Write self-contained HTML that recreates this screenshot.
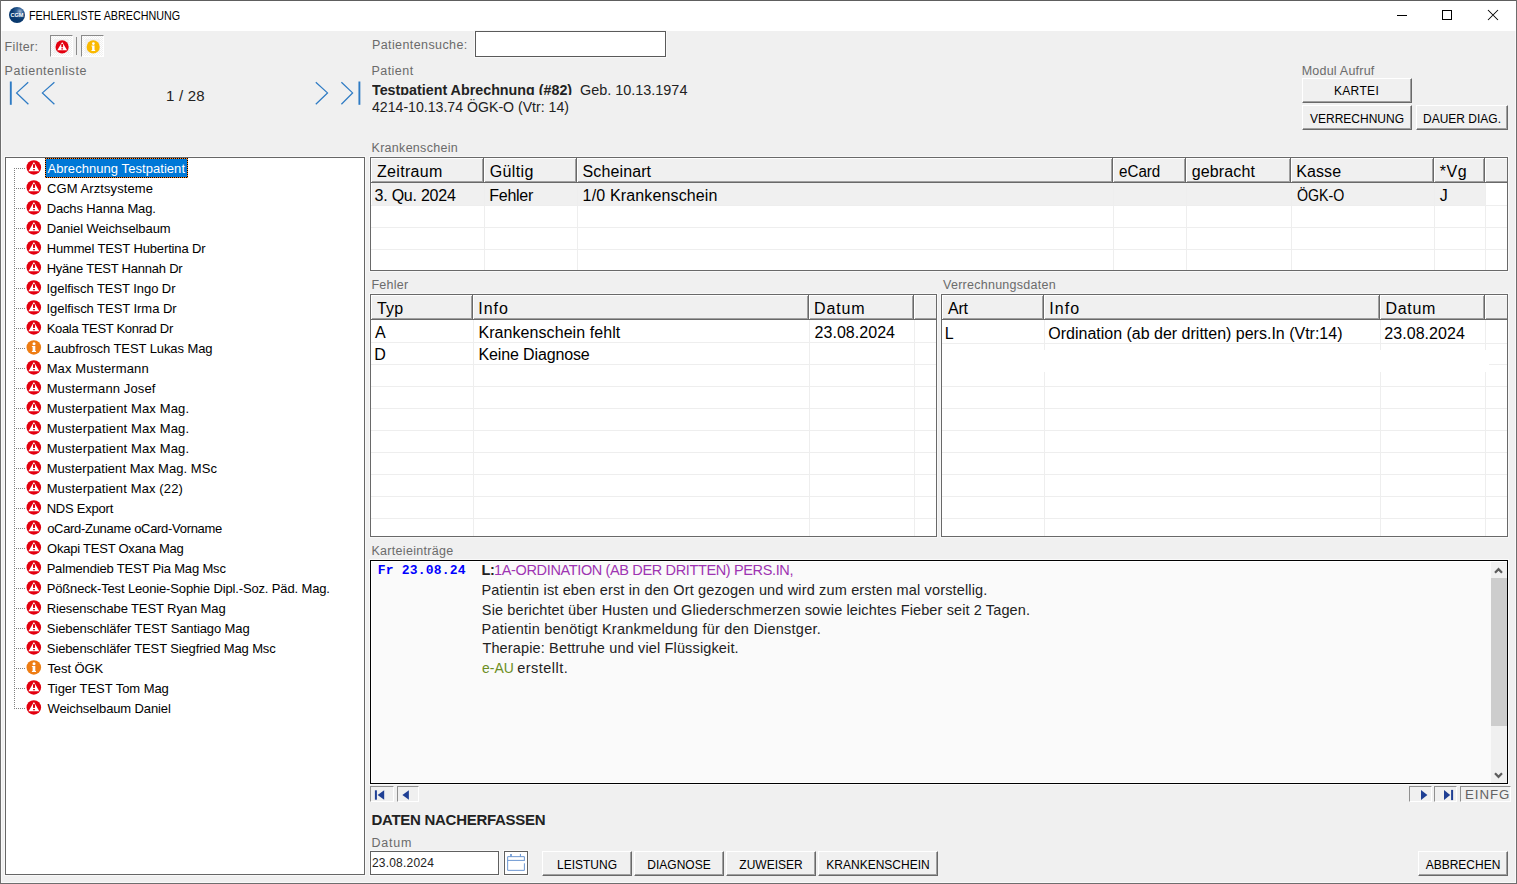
<!DOCTYPE html>
<html lang="de"><head><meta charset="utf-8"><title>FEHLERLISTE ABRECHNUNG</title>
<style>
html,body{margin:0;padding:0;width:1517px;height:884px;overflow:hidden;background:#f0f0f0;font-family:"Liberation Sans",sans-serif}
.a{position:absolute;box-sizing:content-box}
.t{position:absolute;white-space:pre;line-height:20px;height:20px}
.tbl{background:#fff;border:1px solid #696969;box-shadow:0 0 0 1px #f8f8f8}
.btn{background:#f0f0f0;box-sizing:border-box;border:1px solid;border-color:#fff #696969 #696969 #fff;box-shadow:inset -1px -1px 0 #a0a0a0;
 font-size:12px;color:#000;text-align:center;line-height:25px;white-space:pre}
.btn span{position:relative;top:.5px}
.btn.k span{top:-.5px;letter-spacing:.35px;left:-.5px}
.tog{background:repeating-conic-gradient(#fff 0 25%,#f0f0f0 0 50%) 0 0/2px 2px;border:1px solid;border-color:#8a8a8a #fff #fff #8a8a8a}
.snk{background:#f0f0f0;border:1px solid;border-color:#909090 #fff #fff #909090}
.vdot{background:repeating-linear-gradient(to bottom,#808080 0,#808080 1px,transparent 1px,transparent 2px)}
.hdot{background:repeating-linear-gradient(to right,#808080 0,#808080 1px,transparent 1px,transparent 2px)}
</style></head>
<body>
<div class="a" style="left:0px;top:0px;width:1517px;height:884px;background:#fff;border:0"></div>
<div class="a" style="left:1px;top:31px;width:1515px;height:852px;background:#f0f0f0;"></div>
<div class="a" style="left:1px;top:31px;width:1px;height:852px;background:#f9f9f9;"></div>
<div class="a" style="left:1515px;top:31px;width:1px;height:852px;background:#f9f9f9;"></div>
<div class="a" style="left:1px;top:882px;width:1515px;height:1px;background:#f9f9f9;"></div>
<div class="a" style="left:0px;top:0px;width:1517px;height:1px;background:#5e5e5e;"></div>
<div class="a" style="left:0px;top:0px;width:1px;height:884px;background:#6e6e6e;"></div>
<div class="a" style="left:1516px;top:0px;width:1px;height:884px;background:#6e6e6e;"></div>
<div class="a" style="left:0px;top:883px;width:1517px;height:1px;background:#6e6e6e;"></div>
<div class="a" style="left:9px;top:7px;width:16px;height:16px;border-radius:50%;background:radial-gradient(circle at 68% 28%,#9fb6d0 0%,#2f5f95 22%,#0b3b70 48%,#063468 100%)"></div>
<div class="a" style="left:9px;top:11.2px;width:16px;height:8px;line-height:8px;text-align:center;color:#fff;font-size:5.6px;font-weight:bold;letter-spacing:-.1px">CGM</div>
<div class="a" style="left:1397px;top:15px;width:10px;height:1px;background:#000;"></div>
<div class="a" style="left:1442px;top:10px;width:8px;height:8px;border:1px solid #000"></div>
<svg class="a" style="left:1487px;top:9px" width="12" height="12" viewBox="0 0 12 12"><path d="M1 1 L11 11 M11 1 L1 11" stroke="#000" stroke-width="1.05" fill="none"/></svg>
<div class="a tog" style="left:50px;top:35px;width:21px;height:20px"></div>
<div class="a" style="left:54px;top:39px;width:15px;height:14px;background:#f0f0f0;"></div>
<div class="a tog" style="left:81px;top:35px;width:21px;height:20px"></div>
<div class="a" style="left:85px;top:39px;width:15px;height:14px;background:#f0f0f0;"></div>
<div class="a" style="left:76px;top:37px;width:1px;height:18px;background:#8c8c8c;"></div>
<svg class="a" style="left:54px;top:39px" width="16" height="16" viewBox="0 0 16 16"><g transform="translate(0.90 0.70) scale(0.9000)"><circle cx="8" cy="8" r="7.3" fill="#e3000f"/><path d="M8.1 2.6 L13.5 11.7 L2.7 11.7 Z" fill="#fff"/><rect x="7.1" y="4.9" width="2" height="3.5" rx=".3" fill="#e3000f"/><rect x="7.1" y="9.5" width="2" height="1.4" rx=".3" fill="#e3000f"/></g></svg>
<svg class="a" style="left:86px;top:39px" width="16" height="16" viewBox="0 0 16 16"><g transform="translate(0.00 0.70) scale(0.9000)"><circle cx="8" cy="8" r="7.3" fill="#fab900"/><circle cx="8.2" cy="4.3" r="1.5" fill="#fff"/><path d="M6.1 6.5 H9.5 V11.5 H10.2 V12.5 H6.1 V11.5 H6.8 V7.5 H6.1 Z" fill="#fff"/></g></svg>
<svg class="a" style="left:5px;top:78px" width="360" height="30" viewBox="5 78 360 30" fill="none" stroke="#2e7bc4" stroke-width="1.25" stroke-linecap="butt"><path d="M10.8 81.5 V104.8" stroke-width="1.9"/><path d="M28.2 82.3 L16.6 92.9 L28.4 104.3"/><path d="M54.4 82.3 L42.4 92.9 L54.4 104.3"/><path d="M315.8 82.3 L327.5 92.9 L315.8 104.3"/><path d="M341.4 82.3 L352.6 92.9 L341.4 104.3"/><path d="M359.4 81.5 V104.8" stroke-width="1.9"/></svg>
<div class="a" style="left:5px;top:157px;width:358px;height:716px;background:#fff;border:1px solid #666;box-shadow:0 0 0 1px #f8f8f8"></div>
<div class="a vdot" style="left:14px;top:168px;width:1px;height:541px"></div>
<div class="a hdot" style="left:14px;top:168px;width:12px;height:1px"></div>
<svg class="a" style="left:25px;top:159px" width="17" height="17" viewBox="0 0 17 17"><g transform="translate(0.80 0.45) scale(1.0000)"><circle cx="8" cy="8" r="7.3" fill="#e3000f"/><path d="M8.1 2.6 L13.5 11.7 L2.7 11.7 Z" fill="#fff"/><rect x="7.2" y="4.55" width="2" height="4" rx=".4" fill="#e3000f"/><rect x="7.2" y="9.55" width="2" height="1.3" rx=".4" fill="#e3000f"/></g></svg>
<div class="a hdot" style="left:14px;top:188px;width:12px;height:1px"></div>
<svg class="a" style="left:25px;top:179px" width="17" height="17" viewBox="0 0 17 17"><g transform="translate(0.80 0.45) scale(1.0000)"><circle cx="8" cy="8" r="7.3" fill="#e3000f"/><path d="M8.1 2.6 L13.5 11.7 L2.7 11.7 Z" fill="#fff"/><rect x="7.2" y="4.55" width="2" height="4" rx=".4" fill="#e3000f"/><rect x="7.2" y="9.55" width="2" height="1.3" rx=".4" fill="#e3000f"/></g></svg>
<div class="a hdot" style="left:14px;top:208px;width:12px;height:1px"></div>
<svg class="a" style="left:25px;top:199px" width="17" height="17" viewBox="0 0 17 17"><g transform="translate(0.80 0.45) scale(1.0000)"><circle cx="8" cy="8" r="7.3" fill="#e3000f"/><path d="M8.1 2.6 L13.5 11.7 L2.7 11.7 Z" fill="#fff"/><rect x="7.2" y="4.55" width="2" height="4" rx=".4" fill="#e3000f"/><rect x="7.2" y="9.55" width="2" height="1.3" rx=".4" fill="#e3000f"/></g></svg>
<div class="a hdot" style="left:14px;top:228px;width:12px;height:1px"></div>
<svg class="a" style="left:25px;top:219px" width="17" height="17" viewBox="0 0 17 17"><g transform="translate(0.80 0.45) scale(1.0000)"><circle cx="8" cy="8" r="7.3" fill="#e3000f"/><path d="M8.1 2.6 L13.5 11.7 L2.7 11.7 Z" fill="#fff"/><rect x="7.2" y="4.55" width="2" height="4" rx=".4" fill="#e3000f"/><rect x="7.2" y="9.55" width="2" height="1.3" rx=".4" fill="#e3000f"/></g></svg>
<div class="a hdot" style="left:14px;top:248px;width:12px;height:1px"></div>
<svg class="a" style="left:25px;top:239px" width="17" height="17" viewBox="0 0 17 17"><g transform="translate(0.80 0.45) scale(1.0000)"><circle cx="8" cy="8" r="7.3" fill="#e3000f"/><path d="M8.1 2.6 L13.5 11.7 L2.7 11.7 Z" fill="#fff"/><rect x="7.2" y="4.55" width="2" height="4" rx=".4" fill="#e3000f"/><rect x="7.2" y="9.55" width="2" height="1.3" rx=".4" fill="#e3000f"/></g></svg>
<div class="a hdot" style="left:14px;top:268px;width:12px;height:1px"></div>
<svg class="a" style="left:25px;top:259px" width="17" height="17" viewBox="0 0 17 17"><g transform="translate(0.80 0.45) scale(1.0000)"><circle cx="8" cy="8" r="7.3" fill="#e3000f"/><path d="M8.1 2.6 L13.5 11.7 L2.7 11.7 Z" fill="#fff"/><rect x="7.2" y="4.55" width="2" height="4" rx=".4" fill="#e3000f"/><rect x="7.2" y="9.55" width="2" height="1.3" rx=".4" fill="#e3000f"/></g></svg>
<div class="a hdot" style="left:14px;top:288px;width:12px;height:1px"></div>
<svg class="a" style="left:25px;top:279px" width="17" height="17" viewBox="0 0 17 17"><g transform="translate(0.80 0.45) scale(1.0000)"><circle cx="8" cy="8" r="7.3" fill="#e3000f"/><path d="M8.1 2.6 L13.5 11.7 L2.7 11.7 Z" fill="#fff"/><rect x="7.2" y="4.55" width="2" height="4" rx=".4" fill="#e3000f"/><rect x="7.2" y="9.55" width="2" height="1.3" rx=".4" fill="#e3000f"/></g></svg>
<div class="a hdot" style="left:14px;top:308px;width:12px;height:1px"></div>
<svg class="a" style="left:25px;top:299px" width="17" height="17" viewBox="0 0 17 17"><g transform="translate(0.80 0.45) scale(1.0000)"><circle cx="8" cy="8" r="7.3" fill="#e3000f"/><path d="M8.1 2.6 L13.5 11.7 L2.7 11.7 Z" fill="#fff"/><rect x="7.2" y="4.55" width="2" height="4" rx=".4" fill="#e3000f"/><rect x="7.2" y="9.55" width="2" height="1.3" rx=".4" fill="#e3000f"/></g></svg>
<div class="a hdot" style="left:14px;top:328px;width:12px;height:1px"></div>
<svg class="a" style="left:25px;top:319px" width="17" height="17" viewBox="0 0 17 17"><g transform="translate(0.80 0.45) scale(1.0000)"><circle cx="8" cy="8" r="7.3" fill="#e3000f"/><path d="M8.1 2.6 L13.5 11.7 L2.7 11.7 Z" fill="#fff"/><rect x="7.2" y="4.55" width="2" height="4" rx=".4" fill="#e3000f"/><rect x="7.2" y="9.55" width="2" height="1.3" rx=".4" fill="#e3000f"/></g></svg>
<div class="a hdot" style="left:14px;top:348px;width:12px;height:1px"></div>
<svg class="a" style="left:25px;top:339px" width="17" height="17" viewBox="0 0 17 17"><g transform="translate(0.80 0.45) scale(1.0000)"><circle cx="8" cy="8" r="7.3" fill="#ee7d14"/><circle cx="8.2" cy="4.3" r="1.5" fill="#fff"/><path d="M6.1 6.5 H9.5 V11.5 H10.2 V12.5 H6.1 V11.5 H6.8 V7.5 H6.1 Z" fill="#fff"/></g></svg>
<div class="a hdot" style="left:14px;top:368px;width:12px;height:1px"></div>
<svg class="a" style="left:25px;top:359px" width="17" height="17" viewBox="0 0 17 17"><g transform="translate(0.80 0.45) scale(1.0000)"><circle cx="8" cy="8" r="7.3" fill="#e3000f"/><path d="M8.1 2.6 L13.5 11.7 L2.7 11.7 Z" fill="#fff"/><rect x="7.2" y="4.55" width="2" height="4" rx=".4" fill="#e3000f"/><rect x="7.2" y="9.55" width="2" height="1.3" rx=".4" fill="#e3000f"/></g></svg>
<div class="a hdot" style="left:14px;top:388px;width:12px;height:1px"></div>
<svg class="a" style="left:25px;top:379px" width="17" height="17" viewBox="0 0 17 17"><g transform="translate(0.80 0.45) scale(1.0000)"><circle cx="8" cy="8" r="7.3" fill="#e3000f"/><path d="M8.1 2.6 L13.5 11.7 L2.7 11.7 Z" fill="#fff"/><rect x="7.2" y="4.55" width="2" height="4" rx=".4" fill="#e3000f"/><rect x="7.2" y="9.55" width="2" height="1.3" rx=".4" fill="#e3000f"/></g></svg>
<div class="a hdot" style="left:14px;top:408px;width:12px;height:1px"></div>
<svg class="a" style="left:25px;top:399px" width="17" height="17" viewBox="0 0 17 17"><g transform="translate(0.80 0.45) scale(1.0000)"><circle cx="8" cy="8" r="7.3" fill="#e3000f"/><path d="M8.1 2.6 L13.5 11.7 L2.7 11.7 Z" fill="#fff"/><rect x="7.2" y="4.55" width="2" height="4" rx=".4" fill="#e3000f"/><rect x="7.2" y="9.55" width="2" height="1.3" rx=".4" fill="#e3000f"/></g></svg>
<div class="a hdot" style="left:14px;top:428px;width:12px;height:1px"></div>
<svg class="a" style="left:25px;top:419px" width="17" height="17" viewBox="0 0 17 17"><g transform="translate(0.80 0.45) scale(1.0000)"><circle cx="8" cy="8" r="7.3" fill="#e3000f"/><path d="M8.1 2.6 L13.5 11.7 L2.7 11.7 Z" fill="#fff"/><rect x="7.2" y="4.55" width="2" height="4" rx=".4" fill="#e3000f"/><rect x="7.2" y="9.55" width="2" height="1.3" rx=".4" fill="#e3000f"/></g></svg>
<div class="a hdot" style="left:14px;top:448px;width:12px;height:1px"></div>
<svg class="a" style="left:25px;top:439px" width="17" height="17" viewBox="0 0 17 17"><g transform="translate(0.80 0.45) scale(1.0000)"><circle cx="8" cy="8" r="7.3" fill="#e3000f"/><path d="M8.1 2.6 L13.5 11.7 L2.7 11.7 Z" fill="#fff"/><rect x="7.2" y="4.55" width="2" height="4" rx=".4" fill="#e3000f"/><rect x="7.2" y="9.55" width="2" height="1.3" rx=".4" fill="#e3000f"/></g></svg>
<div class="a hdot" style="left:14px;top:468px;width:12px;height:1px"></div>
<svg class="a" style="left:25px;top:459px" width="17" height="17" viewBox="0 0 17 17"><g transform="translate(0.80 0.45) scale(1.0000)"><circle cx="8" cy="8" r="7.3" fill="#e3000f"/><path d="M8.1 2.6 L13.5 11.7 L2.7 11.7 Z" fill="#fff"/><rect x="7.2" y="4.55" width="2" height="4" rx=".4" fill="#e3000f"/><rect x="7.2" y="9.55" width="2" height="1.3" rx=".4" fill="#e3000f"/></g></svg>
<div class="a hdot" style="left:14px;top:488px;width:12px;height:1px"></div>
<svg class="a" style="left:25px;top:479px" width="17" height="17" viewBox="0 0 17 17"><g transform="translate(0.80 0.45) scale(1.0000)"><circle cx="8" cy="8" r="7.3" fill="#e3000f"/><path d="M8.1 2.6 L13.5 11.7 L2.7 11.7 Z" fill="#fff"/><rect x="7.2" y="4.55" width="2" height="4" rx=".4" fill="#e3000f"/><rect x="7.2" y="9.55" width="2" height="1.3" rx=".4" fill="#e3000f"/></g></svg>
<div class="a hdot" style="left:14px;top:508px;width:12px;height:1px"></div>
<svg class="a" style="left:25px;top:499px" width="17" height="17" viewBox="0 0 17 17"><g transform="translate(0.80 0.45) scale(1.0000)"><circle cx="8" cy="8" r="7.3" fill="#e3000f"/><path d="M8.1 2.6 L13.5 11.7 L2.7 11.7 Z" fill="#fff"/><rect x="7.2" y="4.55" width="2" height="4" rx=".4" fill="#e3000f"/><rect x="7.2" y="9.55" width="2" height="1.3" rx=".4" fill="#e3000f"/></g></svg>
<div class="a hdot" style="left:14px;top:528px;width:12px;height:1px"></div>
<svg class="a" style="left:25px;top:519px" width="17" height="17" viewBox="0 0 17 17"><g transform="translate(0.80 0.45) scale(1.0000)"><circle cx="8" cy="8" r="7.3" fill="#e3000f"/><path d="M8.1 2.6 L13.5 11.7 L2.7 11.7 Z" fill="#fff"/><rect x="7.2" y="4.55" width="2" height="4" rx=".4" fill="#e3000f"/><rect x="7.2" y="9.55" width="2" height="1.3" rx=".4" fill="#e3000f"/></g></svg>
<div class="a hdot" style="left:14px;top:548px;width:12px;height:1px"></div>
<svg class="a" style="left:25px;top:539px" width="17" height="17" viewBox="0 0 17 17"><g transform="translate(0.80 0.45) scale(1.0000)"><circle cx="8" cy="8" r="7.3" fill="#e3000f"/><path d="M8.1 2.6 L13.5 11.7 L2.7 11.7 Z" fill="#fff"/><rect x="7.2" y="4.55" width="2" height="4" rx=".4" fill="#e3000f"/><rect x="7.2" y="9.55" width="2" height="1.3" rx=".4" fill="#e3000f"/></g></svg>
<div class="a hdot" style="left:14px;top:568px;width:12px;height:1px"></div>
<svg class="a" style="left:25px;top:559px" width="17" height="17" viewBox="0 0 17 17"><g transform="translate(0.80 0.45) scale(1.0000)"><circle cx="8" cy="8" r="7.3" fill="#e3000f"/><path d="M8.1 2.6 L13.5 11.7 L2.7 11.7 Z" fill="#fff"/><rect x="7.2" y="4.55" width="2" height="4" rx=".4" fill="#e3000f"/><rect x="7.2" y="9.55" width="2" height="1.3" rx=".4" fill="#e3000f"/></g></svg>
<div class="a hdot" style="left:14px;top:588px;width:12px;height:1px"></div>
<svg class="a" style="left:25px;top:579px" width="17" height="17" viewBox="0 0 17 17"><g transform="translate(0.80 0.45) scale(1.0000)"><circle cx="8" cy="8" r="7.3" fill="#e3000f"/><path d="M8.1 2.6 L13.5 11.7 L2.7 11.7 Z" fill="#fff"/><rect x="7.2" y="4.55" width="2" height="4" rx=".4" fill="#e3000f"/><rect x="7.2" y="9.55" width="2" height="1.3" rx=".4" fill="#e3000f"/></g></svg>
<div class="a hdot" style="left:14px;top:608px;width:12px;height:1px"></div>
<svg class="a" style="left:25px;top:599px" width="17" height="17" viewBox="0 0 17 17"><g transform="translate(0.80 0.45) scale(1.0000)"><circle cx="8" cy="8" r="7.3" fill="#e3000f"/><path d="M8.1 2.6 L13.5 11.7 L2.7 11.7 Z" fill="#fff"/><rect x="7.2" y="4.55" width="2" height="4" rx=".4" fill="#e3000f"/><rect x="7.2" y="9.55" width="2" height="1.3" rx=".4" fill="#e3000f"/></g></svg>
<div class="a hdot" style="left:14px;top:628px;width:12px;height:1px"></div>
<svg class="a" style="left:25px;top:619px" width="17" height="17" viewBox="0 0 17 17"><g transform="translate(0.80 0.45) scale(1.0000)"><circle cx="8" cy="8" r="7.3" fill="#e3000f"/><path d="M8.1 2.6 L13.5 11.7 L2.7 11.7 Z" fill="#fff"/><rect x="7.2" y="4.55" width="2" height="4" rx=".4" fill="#e3000f"/><rect x="7.2" y="9.55" width="2" height="1.3" rx=".4" fill="#e3000f"/></g></svg>
<div class="a hdot" style="left:14px;top:648px;width:12px;height:1px"></div>
<svg class="a" style="left:25px;top:639px" width="17" height="17" viewBox="0 0 17 17"><g transform="translate(0.80 0.45) scale(1.0000)"><circle cx="8" cy="8" r="7.3" fill="#e3000f"/><path d="M8.1 2.6 L13.5 11.7 L2.7 11.7 Z" fill="#fff"/><rect x="7.2" y="4.55" width="2" height="4" rx=".4" fill="#e3000f"/><rect x="7.2" y="9.55" width="2" height="1.3" rx=".4" fill="#e3000f"/></g></svg>
<div class="a hdot" style="left:14px;top:668px;width:12px;height:1px"></div>
<svg class="a" style="left:25px;top:659px" width="17" height="17" viewBox="0 0 17 17"><g transform="translate(0.80 0.45) scale(1.0000)"><circle cx="8" cy="8" r="7.3" fill="#ee7d14"/><circle cx="8.2" cy="4.3" r="1.5" fill="#fff"/><path d="M6.1 6.5 H9.5 V11.5 H10.2 V12.5 H6.1 V11.5 H6.8 V7.5 H6.1 Z" fill="#fff"/></g></svg>
<div class="a hdot" style="left:14px;top:688px;width:12px;height:1px"></div>
<svg class="a" style="left:25px;top:679px" width="17" height="17" viewBox="0 0 17 17"><g transform="translate(0.80 0.45) scale(1.0000)"><circle cx="8" cy="8" r="7.3" fill="#e3000f"/><path d="M8.1 2.6 L13.5 11.7 L2.7 11.7 Z" fill="#fff"/><rect x="7.2" y="4.55" width="2" height="4" rx=".4" fill="#e3000f"/><rect x="7.2" y="9.55" width="2" height="1.3" rx=".4" fill="#e3000f"/></g></svg>
<div class="a hdot" style="left:14px;top:708px;width:12px;height:1px"></div>
<svg class="a" style="left:25px;top:699px" width="17" height="17" viewBox="0 0 17 17"><g transform="translate(0.80 0.45) scale(1.0000)"><circle cx="8" cy="8" r="7.3" fill="#e3000f"/><path d="M8.1 2.6 L13.5 11.7 L2.7 11.7 Z" fill="#fff"/><rect x="7.2" y="4.55" width="2" height="4" rx=".4" fill="#e3000f"/><rect x="7.2" y="9.55" width="2" height="1.3" rx=".4" fill="#e3000f"/></g></svg>
<div class="a" style="left:45px;top:158px;width:143px;height:20px;background:repeating-conic-gradient(#ff8728 0 25%,#000 0 50%) 0 0/2px 2px"></div>
<div class="a" style="left:46px;top:159px;width:141px;height:18px;background:#0078d7"></div>
<div class="a" style="left:475px;top:31px;width:189px;height:24px;background:#fff;border:1px solid #5a5a5a;box-shadow:0 0 0 1px #f8f8f8"></div>
<div class="a btn k" style="left:1302px;top:78px;width:110px;height:25px"><span>KARTEI</span></div>
<div class="a btn" style="left:1302px;top:105px;width:110px;height:25px"><span>VERRECHNUNG</span></div>
<div class="a btn" style="left:1416px;top:105px;width:92px;height:25px"><span>DAUER DIAG.</span></div>
<div class="a tbl" style="left:370px;top:157px;width:1136px;height:112px"></div>
<div class="a" style="left:371px;top:158px;width:113px;height:25px;background:#f0f0f0;"></div>
<div class="a" style="left:371px;top:158px;width:113px;height:1px;background:#fff;"></div>
<div class="a" style="left:371px;top:158px;width:1px;height:24px;background:#fff;"></div>
<div class="a" style="left:482px;top:159px;width:1px;height:23px;background:#a0a0a0;"></div>
<div class="a" style="left:372px;top:181px;width:111px;height:1px;background:#a0a0a0;"></div>
<div class="a" style="left:483px;top:158px;width:1px;height:25px;background:#696969;"></div>
<div class="a" style="left:371px;top:182px;width:113px;height:1px;background:#696969;"></div>
<div class="a" style="left:484px;top:158px;width:93px;height:25px;background:#f0f0f0;"></div>
<div class="a" style="left:484px;top:158px;width:93px;height:1px;background:#fff;"></div>
<div class="a" style="left:484px;top:158px;width:1px;height:24px;background:#fff;"></div>
<div class="a" style="left:575px;top:159px;width:1px;height:23px;background:#a0a0a0;"></div>
<div class="a" style="left:485px;top:181px;width:91px;height:1px;background:#a0a0a0;"></div>
<div class="a" style="left:576px;top:158px;width:1px;height:25px;background:#696969;"></div>
<div class="a" style="left:484px;top:182px;width:93px;height:1px;background:#696969;"></div>
<div class="a" style="left:577px;top:158px;width:536px;height:25px;background:#f0f0f0;"></div>
<div class="a" style="left:577px;top:158px;width:536px;height:1px;background:#fff;"></div>
<div class="a" style="left:577px;top:158px;width:1px;height:24px;background:#fff;"></div>
<div class="a" style="left:1111px;top:159px;width:1px;height:23px;background:#a0a0a0;"></div>
<div class="a" style="left:578px;top:181px;width:534px;height:1px;background:#a0a0a0;"></div>
<div class="a" style="left:1112px;top:158px;width:1px;height:25px;background:#696969;"></div>
<div class="a" style="left:577px;top:182px;width:536px;height:1px;background:#696969;"></div>
<div class="a" style="left:1113px;top:158px;width:73px;height:25px;background:#f0f0f0;"></div>
<div class="a" style="left:1113px;top:158px;width:73px;height:1px;background:#fff;"></div>
<div class="a" style="left:1113px;top:158px;width:1px;height:24px;background:#fff;"></div>
<div class="a" style="left:1184px;top:159px;width:1px;height:23px;background:#a0a0a0;"></div>
<div class="a" style="left:1114px;top:181px;width:71px;height:1px;background:#a0a0a0;"></div>
<div class="a" style="left:1185px;top:158px;width:1px;height:25px;background:#696969;"></div>
<div class="a" style="left:1113px;top:182px;width:73px;height:1px;background:#696969;"></div>
<div class="a" style="left:1186px;top:158px;width:105px;height:25px;background:#f0f0f0;"></div>
<div class="a" style="left:1186px;top:158px;width:105px;height:1px;background:#fff;"></div>
<div class="a" style="left:1186px;top:158px;width:1px;height:24px;background:#fff;"></div>
<div class="a" style="left:1289px;top:159px;width:1px;height:23px;background:#a0a0a0;"></div>
<div class="a" style="left:1187px;top:181px;width:103px;height:1px;background:#a0a0a0;"></div>
<div class="a" style="left:1290px;top:158px;width:1px;height:25px;background:#696969;"></div>
<div class="a" style="left:1186px;top:182px;width:105px;height:1px;background:#696969;"></div>
<div class="a" style="left:1291px;top:158px;width:143px;height:25px;background:#f0f0f0;"></div>
<div class="a" style="left:1291px;top:158px;width:143px;height:1px;background:#fff;"></div>
<div class="a" style="left:1291px;top:158px;width:1px;height:24px;background:#fff;"></div>
<div class="a" style="left:1432px;top:159px;width:1px;height:23px;background:#a0a0a0;"></div>
<div class="a" style="left:1292px;top:181px;width:141px;height:1px;background:#a0a0a0;"></div>
<div class="a" style="left:1433px;top:158px;width:1px;height:25px;background:#696969;"></div>
<div class="a" style="left:1291px;top:182px;width:143px;height:1px;background:#696969;"></div>
<div class="a" style="left:1434px;top:158px;width:51px;height:25px;background:#f0f0f0;"></div>
<div class="a" style="left:1434px;top:158px;width:51px;height:1px;background:#fff;"></div>
<div class="a" style="left:1434px;top:158px;width:1px;height:24px;background:#fff;"></div>
<div class="a" style="left:1483px;top:159px;width:1px;height:23px;background:#a0a0a0;"></div>
<div class="a" style="left:1435px;top:181px;width:49px;height:1px;background:#a0a0a0;"></div>
<div class="a" style="left:1484px;top:158px;width:1px;height:25px;background:#696969;"></div>
<div class="a" style="left:1434px;top:182px;width:51px;height:1px;background:#696969;"></div>
<div class="a" style="left:1485px;top:158px;width:22px;height:25px;background:#f0f0f0;"></div>
<div class="a" style="left:1485px;top:158px;width:22px;height:1px;background:#fff;"></div>
<div class="a" style="left:1485px;top:158px;width:1px;height:24px;background:#fff;"></div>
<div class="a" style="left:1486px;top:181px;width:21px;height:1px;background:#a0a0a0;"></div>
<div class="a" style="left:1485px;top:182px;width:22px;height:1px;background:#696969;"></div>
<div class="a" style="left:372px;top:183px;width:1114px;height:23px;background:#f0f0f0;"></div>
<div class="a" style="left:371px;top:205px;width:1136px;height:1px;background:#eeeeee;"></div>
<div class="a" style="left:371px;top:227px;width:1136px;height:1px;background:#eeeeee;"></div>
<div class="a" style="left:371px;top:249px;width:1136px;height:1px;background:#eeeeee;"></div>
<div class="a" style="left:484px;top:183px;width:1px;height:87px;background:#eeeeee;"></div>
<div class="a" style="left:577px;top:183px;width:1px;height:87px;background:#eeeeee;"></div>
<div class="a" style="left:1113px;top:183px;width:1px;height:87px;background:#eeeeee;"></div>
<div class="a" style="left:1186px;top:183px;width:1px;height:87px;background:#eeeeee;"></div>
<div class="a" style="left:1291px;top:183px;width:1px;height:87px;background:#eeeeee;"></div>
<div class="a" style="left:1434px;top:183px;width:1px;height:87px;background:#eeeeee;"></div>
<div class="a" style="left:1485px;top:183px;width:1px;height:87px;background:#eeeeee;"></div>
<div class="a tbl" style="left:370px;top:294px;width:565px;height:241px"></div>
<div class="a" style="left:371px;top:295px;width:102px;height:25px;background:#f0f0f0;"></div>
<div class="a" style="left:371px;top:295px;width:102px;height:1px;background:#fff;"></div>
<div class="a" style="left:371px;top:295px;width:1px;height:24px;background:#fff;"></div>
<div class="a" style="left:471px;top:296px;width:1px;height:23px;background:#a0a0a0;"></div>
<div class="a" style="left:372px;top:318px;width:100px;height:1px;background:#a0a0a0;"></div>
<div class="a" style="left:472px;top:295px;width:1px;height:25px;background:#696969;"></div>
<div class="a" style="left:371px;top:319px;width:102px;height:1px;background:#696969;"></div>
<div class="a" style="left:473px;top:295px;width:336px;height:25px;background:#f0f0f0;"></div>
<div class="a" style="left:473px;top:295px;width:336px;height:1px;background:#fff;"></div>
<div class="a" style="left:473px;top:295px;width:1px;height:24px;background:#fff;"></div>
<div class="a" style="left:807px;top:296px;width:1px;height:23px;background:#a0a0a0;"></div>
<div class="a" style="left:474px;top:318px;width:334px;height:1px;background:#a0a0a0;"></div>
<div class="a" style="left:808px;top:295px;width:1px;height:25px;background:#696969;"></div>
<div class="a" style="left:473px;top:319px;width:336px;height:1px;background:#696969;"></div>
<div class="a" style="left:809px;top:295px;width:105px;height:25px;background:#f0f0f0;"></div>
<div class="a" style="left:809px;top:295px;width:105px;height:1px;background:#fff;"></div>
<div class="a" style="left:809px;top:295px;width:1px;height:24px;background:#fff;"></div>
<div class="a" style="left:912px;top:296px;width:1px;height:23px;background:#a0a0a0;"></div>
<div class="a" style="left:810px;top:318px;width:103px;height:1px;background:#a0a0a0;"></div>
<div class="a" style="left:913px;top:295px;width:1px;height:25px;background:#696969;"></div>
<div class="a" style="left:809px;top:319px;width:105px;height:1px;background:#696969;"></div>
<div class="a" style="left:914px;top:295px;width:22px;height:25px;background:#f0f0f0;"></div>
<div class="a" style="left:914px;top:295px;width:22px;height:1px;background:#fff;"></div>
<div class="a" style="left:914px;top:295px;width:1px;height:24px;background:#fff;"></div>
<div class="a" style="left:915px;top:318px;width:21px;height:1px;background:#a0a0a0;"></div>
<div class="a" style="left:914px;top:319px;width:22px;height:1px;background:#696969;"></div>
<div class="a" style="left:371px;top:342px;width:565px;height:1px;background:#eeeeee;"></div>
<div class="a" style="left:371px;top:364px;width:565px;height:1px;background:#eeeeee;"></div>
<div class="a" style="left:371px;top:386px;width:565px;height:1px;background:#eeeeee;"></div>
<div class="a" style="left:371px;top:408px;width:565px;height:1px;background:#eeeeee;"></div>
<div class="a" style="left:371px;top:430px;width:565px;height:1px;background:#eeeeee;"></div>
<div class="a" style="left:371px;top:452px;width:565px;height:1px;background:#eeeeee;"></div>
<div class="a" style="left:371px;top:474px;width:565px;height:1px;background:#eeeeee;"></div>
<div class="a" style="left:371px;top:496px;width:565px;height:1px;background:#eeeeee;"></div>
<div class="a" style="left:371px;top:518px;width:565px;height:1px;background:#eeeeee;"></div>
<div class="a" style="left:473px;top:320px;width:1px;height:216px;background:#eeeeee;"></div>
<div class="a" style="left:809px;top:320px;width:1px;height:216px;background:#eeeeee;"></div>
<div class="a" style="left:914px;top:320px;width:1px;height:216px;background:#eeeeee;"></div>
<div class="a tbl" style="left:941px;top:294px;width:565px;height:241px"></div>
<div class="a" style="left:942px;top:295px;width:102px;height:25px;background:#f0f0f0;"></div>
<div class="a" style="left:942px;top:295px;width:102px;height:1px;background:#fff;"></div>
<div class="a" style="left:942px;top:295px;width:1px;height:24px;background:#fff;"></div>
<div class="a" style="left:1042px;top:296px;width:1px;height:23px;background:#a0a0a0;"></div>
<div class="a" style="left:943px;top:318px;width:100px;height:1px;background:#a0a0a0;"></div>
<div class="a" style="left:1043px;top:295px;width:1px;height:25px;background:#696969;"></div>
<div class="a" style="left:942px;top:319px;width:102px;height:1px;background:#696969;"></div>
<div class="a" style="left:1044px;top:295px;width:336px;height:25px;background:#f0f0f0;"></div>
<div class="a" style="left:1044px;top:295px;width:336px;height:1px;background:#fff;"></div>
<div class="a" style="left:1044px;top:295px;width:1px;height:24px;background:#fff;"></div>
<div class="a" style="left:1378px;top:296px;width:1px;height:23px;background:#a0a0a0;"></div>
<div class="a" style="left:1045px;top:318px;width:334px;height:1px;background:#a0a0a0;"></div>
<div class="a" style="left:1379px;top:295px;width:1px;height:25px;background:#696969;"></div>
<div class="a" style="left:1044px;top:319px;width:336px;height:1px;background:#696969;"></div>
<div class="a" style="left:1380px;top:295px;width:105px;height:25px;background:#f0f0f0;"></div>
<div class="a" style="left:1380px;top:295px;width:105px;height:1px;background:#fff;"></div>
<div class="a" style="left:1380px;top:295px;width:1px;height:24px;background:#fff;"></div>
<div class="a" style="left:1483px;top:296px;width:1px;height:23px;background:#a0a0a0;"></div>
<div class="a" style="left:1381px;top:318px;width:103px;height:1px;background:#a0a0a0;"></div>
<div class="a" style="left:1484px;top:295px;width:1px;height:25px;background:#696969;"></div>
<div class="a" style="left:1380px;top:319px;width:105px;height:1px;background:#696969;"></div>
<div class="a" style="left:1485px;top:295px;width:22px;height:25px;background:#f0f0f0;"></div>
<div class="a" style="left:1485px;top:295px;width:22px;height:1px;background:#fff;"></div>
<div class="a" style="left:1485px;top:295px;width:1px;height:24px;background:#fff;"></div>
<div class="a" style="left:1486px;top:318px;width:21px;height:1px;background:#a0a0a0;"></div>
<div class="a" style="left:1485px;top:319px;width:22px;height:1px;background:#696969;"></div>
<div class="a" style="left:942px;top:343px;width:565px;height:1px;background:#eeeeee;"></div>
<div class="a" style="left:942px;top:364px;width:565px;height:1px;background:#eeeeee;"></div>
<div class="a" style="left:942px;top:386px;width:565px;height:1px;background:#eeeeee;"></div>
<div class="a" style="left:942px;top:408px;width:565px;height:1px;background:#eeeeee;"></div>
<div class="a" style="left:942px;top:430px;width:565px;height:1px;background:#eeeeee;"></div>
<div class="a" style="left:942px;top:452px;width:565px;height:1px;background:#eeeeee;"></div>
<div class="a" style="left:942px;top:474px;width:565px;height:1px;background:#eeeeee;"></div>
<div class="a" style="left:942px;top:496px;width:565px;height:1px;background:#eeeeee;"></div>
<div class="a" style="left:942px;top:518px;width:565px;height:1px;background:#eeeeee;"></div>
<div class="a" style="left:1044px;top:320px;width:1px;height:216px;background:#eeeeee;"></div>
<div class="a" style="left:1380px;top:320px;width:1px;height:216px;background:#eeeeee;"></div>
<div class="a" style="left:1485px;top:320px;width:1px;height:216px;background:#eeeeee;"></div>
<div class="a" style="left:942px;top:350px;width:547px;height:22px;background:#fff;"></div>
<div class="a" style="left:370px;top:560px;width:1136px;height:222px;background:#fff;border:1px solid #000;box-shadow:0 0 0 1px #fafafa"></div>
<div class="a" style="left:372px;top:562px;width:1134px;height:220px;background:#fafafa;"></div>
<div class="a" style="left:1491px;top:562px;width:16px;height:221px;background:#f0f0f0;"></div>
<div class="a" style="left:1491px;top:578px;width:16px;height:148px;background:#cdcdcd;"></div>
<svg class="a" style="left:1491px;top:562px" width="15" height="221" viewBox="0 0 15 221" fill="none" stroke="#5c5c5c" stroke-width="2.2"><path d="M4 10.8 L7.5 7.2 L11 10.8"/><path d="M4 211.2 L7.5 214.8 L11 211.2"/></svg>
<div class="a snk" style="left:370px;top:786px;width:22px;height:14px"></div>
<div class="a snk" style="left:397px;top:786px;width:20px;height:14px"></div>
<div class="a snk" style="left:1409px;top:786px;width:21px;height:14px"></div>
<div class="a snk" style="left:1434px;top:786px;width:21px;height:14px"></div>
<div class="a snk" style="left:1460px;top:786px;width:49px;height:14px;overflow:hidden"></div>
<svg class="a" style="left:370px;top:786px" width="1100" height="17" viewBox="370 786 1100 17" fill="#1f3f94"><rect x="374.9" y="790.3" width="2" height="9.4"/><path d="M384.2 790.3 V799.7 L377.6 795 Z"/><path d="M408.9 790.3 V799.7 L402.4 795 Z"/><path d="M1421 789.9 V800.1 L1427.4 795 Z"/><path d="M1444 789.9 V800.1 L1450.2 795 Z"/><rect x="1451.1" y="789.9" width="2" height="10.2"/></svg>
<div class="a" style="left:1461px;top:787px;width:48.6px;height:15px;overflow:hidden"><div class="t" style="left:4px;top:-2px;font-size:13.3px;color:#626262;letter-spacing:.95px">EINFG</div></div>
<div class="a" style="left:370px;top:851px;width:127px;height:22px;background:#fff;border:1px solid #606060;box-shadow:0 0 0 1px #f8f8f8"></div>
<div class="a" style="left:504px;top:851px;width:22px;height:22px;background:#fff;border:1px solid #606060;box-shadow:0 0 0 1px #f8f8f8"></div>
<svg class="a" style="left:504px;top:851px" width="24" height="24" viewBox="0 0 24 24" fill="none" stroke="#6591cf" stroke-width="0.95" stroke-linejoin="miter"><path d="M20.4 9.8 V5.65 H3.65 V19.35 H20.4 V12.3 M3.65 9.4 H20.4"/><path d="M7 2.9 V5.6" stroke-width="1.6"/><path d="M16.4 2.9 V5.6" stroke-width="1"/></svg>
<div class="a btn" style="left:542px;top:851px;width:90px;height:25px"><span>LEISTUNG</span></div>
<div class="a btn" style="left:634px;top:851px;width:90px;height:25px"><span>DIAGNOSE</span></div>
<div class="a btn" style="left:726px;top:851px;width:90px;height:25px"><span>ZUWEISER</span></div>
<div class="a btn" style="left:818px;top:851px;width:120px;height:25px"><span>KRANKENSCHEIN</span></div>
<div class="a btn" style="left:1418px;top:851px;width:90px;height:25px"><span>ABBRECHEN</span></div>
<div class="a" style="left:370px;top:78px;width:400px;height:17px;overflow:hidden"><div class="t" style="left:2.37px;top:2.00px;font-size:15px;font-weight:bold;color:#222;transform:scaleX(0.9529);transform-origin:0 0">Testpatient Abrechnung (#82)</div><div class="t" style="left:209.70px;top:2.00px;font-size:15px;color:#222;transform:scaleX(0.9610);transform-origin:0 0">Geb. 10.13.1974</div></div>
<div class="t" style='top:6.00px;font-size:12px;color:#000;left:29.40px;transform:scaleX(0.8954);transform-origin:0 0;'>FEHLERLISTE ABRECHNUNG</div>
<div class="t" style='top:37.00px;font-size:12.5px;color:#6b6b6b;left:4.57px;letter-spacing:0.380px;'>Filter:</div>
<div class="t" style='top:61.00px;font-size:12.5px;color:#6b6b6b;left:4.57px;letter-spacing:0.517px;'>Patientenliste</div>
<div class="t" style='top:35.00px;font-size:12.5px;color:#6b6b6b;left:371.97px;letter-spacing:0.400px;'>Patientensuche:</div>
<div class="t" style='top:61.00px;font-size:12.5px;color:#6b6b6b;left:371.47px;letter-spacing:0.458px;'>Patient</div>
<div class="t" style='top:61.00px;font-size:12.5px;color:#6b6b6b;left:1301.67px;letter-spacing:0.222px;'>Modul Aufruf</div>
<div class="t" style='top:138.00px;font-size:12.5px;color:#6b6b6b;left:371.55px;letter-spacing:0.287px;'>Krankenschein</div>
<div class="t" style='top:275.00px;font-size:12.5px;color:#6b6b6b;left:371.47px;letter-spacing:0.252px;'>Fehler</div>
<div class="t" style='top:275.00px;font-size:12.5px;color:#6b6b6b;left:943.05px;letter-spacing:0.260px;'>Verrechnungsdaten</div>
<div class="t" style='top:541.00px;font-size:12.5px;color:#6b6b6b;left:371.45px;letter-spacing:0.305px;'>Karteieinträge</div>
<div class="t" style='top:833.00px;font-size:12.5px;color:#6b6b6b;left:371.47px;letter-spacing:0.787px;'>Datum</div>
<div class="t" style='top:86.00px;font-size:15px;color:#222;left:166.00px;letter-spacing:0.226px;'>1 / 28</div>
<div class="t" style='top:97.00px;font-size:15px;color:#222;left:372.22px;transform:scaleX(0.9413);transform-origin:0 0;'>4214-10.13.74 ÖGK-O (Vtr: 14)</div>
<div class="t" style='top:162.00px;font-size:16px;color:#000;left:376.93px;letter-spacing:0.337px;'>Zeitraum</div>
<div class="t" style='top:162.00px;font-size:16px;color:#000;left:489.74px;letter-spacing:0.359px;'>Gültig</div>
<div class="t" style='top:162.00px;font-size:16px;color:#000;left:582.57px;letter-spacing:0.108px;'>Scheinart</div>
<div class="t" style='top:162.00px;font-size:16px;color:#000;left:1118.76px;transform:scaleX(0.9479);transform-origin:0 0;'>eCard</div>
<div class="t" style='top:162.00px;font-size:16px;color:#000;left:1191.83px;letter-spacing:0.109px;'>gebracht</div>
<div class="t" style='top:162.00px;font-size:16px;color:#000;left:1296.24px;letter-spacing:0.084px;'>Kasse</div>
<div class="t" style='top:162.00px;font-size:16px;color:#000;left:1439.79px;letter-spacing:0.574px;'>*Vg</div>
<div class="t" style='top:186.00px;font-size:16px;color:#000;left:374.57px;letter-spacing:-0.234px;'>3. Qu. 2024</div>
<div class="t" style='top:186.00px;font-size:16px;color:#000;left:489.24px;letter-spacing:-0.258px;'>Fehler</div>
<div class="t" style='top:186.00px;font-size:16px;color:#000;left:582.62px;letter-spacing:0.145px;'>1/0 Krankenschein</div>
<div class="t" style='top:186.00px;font-size:16px;color:#000;left:1296.65px;transform:scaleX(0.8873);transform-origin:0 0;'>ÖGK-O</div>
<div class="t" style='top:186.00px;font-size:16px;color:#000;left:1439.84px;letter-spacing:0.000px;'>J</div>
<div class="t" style='top:299.00px;font-size:16px;color:#000;left:376.98px;letter-spacing:0.175px;'>Typ</div>
<div class="t" style='top:299.00px;font-size:16px;color:#000;left:478.27px;letter-spacing:0.987px;'>Info</div>
<div class="t" style='top:299.00px;font-size:16px;color:#000;left:814.04px;letter-spacing:0.837px;'>Datum</div>
<div class="t" style='top:323.00px;font-size:16px;color:#000;left:375.12px;letter-spacing:0.000px;'>A</div>
<div class="t" style='top:323.00px;font-size:16px;color:#000;left:478.44px;letter-spacing:0.070px;'>Krankenschein fehlt</div>
<div class="t" style='top:323.00px;font-size:16px;color:#000;left:814.57px;letter-spacing:0.041px;'>23.08.2024</div>
<div class="t" style='top:345.00px;font-size:16px;color:#000;left:374.34px;letter-spacing:0.000px;'>D</div>
<div class="t" style='top:345.00px;font-size:16px;color:#000;left:478.44px;letter-spacing:-0.129px;'>Keine Diagnose</div>
<div class="t" style='top:299.00px;font-size:16px;color:#000;left:948.02px;letter-spacing:-0.213px;'>Art</div>
<div class="t" style='top:299.00px;font-size:16px;color:#000;left:1049.17px;letter-spacing:1.120px;'>Info</div>
<div class="t" style='top:299.00px;font-size:16px;color:#000;left:1385.44px;letter-spacing:0.712px;'>Datum</div>
<div class="t" style='top:324.00px;font-size:16px;color:#000;left:944.64px;letter-spacing:0.000px;'>L</div>
<div class="t" style='top:324.00px;font-size:16px;color:#000;left:1048.27px;letter-spacing:-0.003px;'>Ordination (ab der dritten) pers.In (Vtr:14)</div>
<div class="t" style='top:324.00px;font-size:16px;color:#000;left:1384.37px;letter-spacing:0.041px;'>23.08.2024</div>
<div class="t" style='top:561.00px;font-size:13px;color:#0000ff;left:377.74px;letter-spacing:0.188px;font-weight:bold;font-family:"Liberation Mono", monospace;'>Fr 23.08.24</div>
<div class="t" style='top:560.00px;font-size:14.5px;color:#222;left:481.50px;letter-spacing:-0.270px;font-weight:bold;'>L:</div>
<div class="t" style='top:560.00px;font-size:14.5px;color:#9e34b2;left:494.11px;letter-spacing:-0.362px;'>1A-ORDINATION (AB DER DRITTEN) PERS.IN,</div>
<div class="t" style='top:580.00px;font-size:14.5px;color:#222;left:481.54px;letter-spacing:0.152px;'>Patientin ist eben erst in den Ort gezogen und wird zum ersten mal vorstellig.</div>
<div class="t" style='top:600.00px;font-size:14.5px;color:#222;left:481.86px;letter-spacing:0.113px;'>Sie berichtet über Husten und Gliederschmerzen sowie leichtes Fieber seit 2 Tagen.</div>
<div class="t" style='top:619.00px;font-size:14.5px;color:#222;left:481.54px;letter-spacing:0.227px;'>Patientin benötigt Krankmeldung für den Dienstger.</div>
<div class="t" style='top:638.00px;font-size:14.5px;color:#222;left:482.41px;letter-spacing:0.143px;'>Therapie: Bettruhe und viel Flüssigkeit.</div>
<div class="t" style='top:658.00px;font-size:14.5px;color:#6b8e23;left:482.12px;transform:scaleX(0.9605);transform-origin:0 0;'>e-AU</div>
<div class="t" style='top:658.00px;font-size:14.5px;color:#222;left:517.19px;letter-spacing:0.487px;'>erstellt.</div>
<div class="t" style='top:810.00px;font-size:15px;color:#222;left:371.50px;letter-spacing:-0.286px;font-weight:bold;'>DATEN NACHERFASSEN</div>
<div class="t" style='top:853.00px;font-size:12px;color:#222;left:371.90px;letter-spacing:0.215px;'>23.08.2024</div>
<div class="t" style='top:159.00px;font-size:13px;color:#fff;left:47.48px;letter-spacing:0.056px;'>Abrechnung Testpatient</div>
<div class="t" style='top:179.00px;font-size:13px;color:#000;left:47.06px;letter-spacing:0.082px;'>CGM Arztsysteme</div>
<div class="t" style='top:199.00px;font-size:13px;color:#000;left:46.64px;letter-spacing:-0.132px;'>Dachs Hanna Mag.</div>
<div class="t" style='top:219.00px;font-size:13px;color:#000;left:46.64px;letter-spacing:-0.082px;'>Daniel Weichselbaum</div>
<div class="t" style='top:239.00px;font-size:13px;color:#000;left:46.64px;letter-spacing:-0.134px;'>Hummel TEST Hubertina Dr</div>
<div class="t" style='top:259.00px;font-size:13px;color:#000;left:46.64px;letter-spacing:-0.233px;'>Hyäne TEST Hannah Dr</div>
<div class="t" style='top:279.00px;font-size:13px;color:#000;left:46.51px;letter-spacing:-0.061px;'>Igelfisch TEST Ingo Dr</div>
<div class="t" style='top:299.00px;font-size:13px;color:#000;left:46.51px;letter-spacing:-0.045px;'>Igelfisch TEST Irma Dr</div>
<div class="t" style='top:319.00px;font-size:13px;color:#000;left:46.64px;letter-spacing:-0.310px;'>Koala TEST Konrad Dr</div>
<div class="t" style='top:339.00px;font-size:13px;color:#000;left:46.64px;letter-spacing:-0.080px;'>Laubfrosch TEST Lukas Mag</div>
<div class="t" style='top:359.00px;font-size:13px;color:#000;left:46.64px;letter-spacing:0.122px;'>Max Mustermann</div>
<div class="t" style='top:379.00px;font-size:13px;color:#000;left:46.64px;letter-spacing:0.126px;'>Mustermann Josef</div>
<div class="t" style='top:399.00px;font-size:13px;color:#000;left:46.64px;letter-spacing:0.144px;'>Musterpatient Max Mag.</div>
<div class="t" style='top:419.00px;font-size:13px;color:#000;left:46.64px;letter-spacing:0.144px;'>Musterpatient Max Mag.</div>
<div class="t" style='top:439.00px;font-size:13px;color:#000;left:46.64px;letter-spacing:0.144px;'>Musterpatient Max Mag.</div>
<div class="t" style='top:459.00px;font-size:13px;color:#000;left:46.64px;letter-spacing:0.051px;'>Musterpatient Max Mag. MSc</div>
<div class="t" style='top:479.00px;font-size:13px;color:#000;left:46.64px;letter-spacing:0.120px;'>Musterpatient Max (22)</div>
<div class="t" style='top:499.00px;font-size:13px;color:#000;left:46.64px;letter-spacing:-0.217px;'>NDS Export</div>
<div class="t" style='top:519.00px;font-size:13px;color:#000;left:47.15px;letter-spacing:-0.308px;'>oCard-Zuname oCard-Vorname</div>
<div class="t" style='top:539.00px;font-size:13px;color:#000;left:47.09px;letter-spacing:-0.230px;'>Okapi TEST Oxana Mag</div>
<div class="t" style='top:559.00px;font-size:13px;color:#000;left:46.64px;letter-spacing:-0.173px;'>Palmendieb TEST Pia Mag Msc</div>
<div class="t" style='top:579.00px;font-size:13px;color:#000;left:46.64px;letter-spacing:-0.140px;'>Pößneck-Test Leonie-Sophie Dipl.-Soz. Päd. Mag.</div>
<div class="t" style='top:599.00px;font-size:13px;color:#000;left:46.64px;letter-spacing:-0.105px;'>Riesenschabe TEST Ryan Mag</div>
<div class="t" style='top:619.00px;font-size:13px;color:#000;left:46.87px;letter-spacing:-0.109px;'>Siebenschläfer TEST Santiago Mag</div>
<div class="t" style='top:639.00px;font-size:13px;color:#000;left:46.87px;letter-spacing:-0.132px;'>Siebenschläfer TEST Siegfried Mag Msc</div>
<div class="t" style='top:659.00px;font-size:13px;color:#000;left:47.44px;letter-spacing:-0.084px;'>Test ÖGK</div>
<div class="t" style='top:679.00px;font-size:13px;color:#000;left:47.44px;letter-spacing:-0.056px;'>Tiger TEST Tom Mag</div>
<div class="t" style='top:699.00px;font-size:13px;color:#000;left:47.51px;letter-spacing:-0.121px;'>Weichselbaum Daniel</div>
</body></html>
